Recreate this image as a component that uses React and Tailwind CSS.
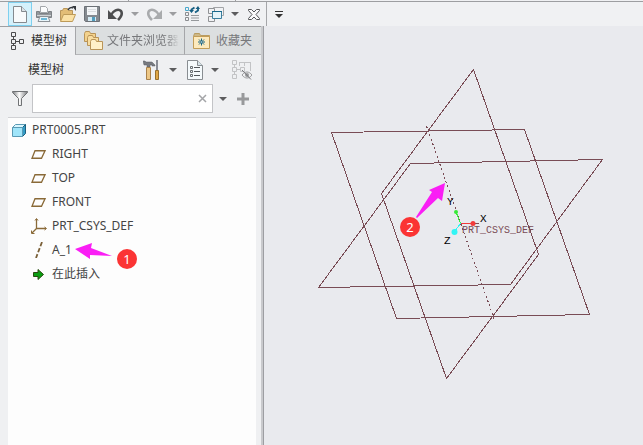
import React, { useState } from 'react';
import clsx from 'clsx';

const Caret = ({ className = 'text-[#5c5c5e]' }) => (
  <svg className={className} width="8" height="4" viewBox="0 0 8 4" fill="currentColor">
    <path d="M0 0h8L4 4z" />
  </svg>
);

const NewFileIcon = () => (
  <svg width="14" height="17" viewBox="0 0 14 17">
    <path d="M.5.5h8l5 5v11H.5z" fill="#f8fafb" stroke="#858a8f" />
    <path d="M8.5.5v5h5" fill="#dce3e7" stroke="#858a8f" />
  </svg>
);

const PrinterIcon = () => (
  <svg width="16" height="16" viewBox="0 0 16 16">
    <path d="M4.5.5h5l2 2v4h-7z" fill="#fbfcfd" stroke="#a3a7ab" />
    <path d="M.5 5.5h3v2h9v-2h3v6H.5z" fill="#94989c" stroke="#7d8185" />
    <path d="M1 9.5h14" stroke="#d0d3d6" />
    <path d="M4 10.5h8l2 5H2z" fill="#e9f5fa" stroke="#8d9297" />
    <path d="M5 13h6" stroke="#6cb8d8" strokeWidth="2" />
  </svg>
);

const OpenIcon = () => (
  <svg width="17" height="16" viewBox="0 0 17 16">
    <path d="M.5 14.5v-10h2l1-2h4l1 2h4v4" fill="#e3bd76" stroke="#b8955a" />
    <path d="M.5 15.5l3-7h12l-3 7z" fill="#fbe1a5" stroke="#bd9a58" />
    <path d="M8 4c1-2 3-3 5-2" fill="none" stroke="#34393e" strokeWidth="1.5" />
    <path d="M12 0h4v5z" fill="#34393e" />
  </svg>
);

const SaveIcon = () => (
  <svg width="16" height="16" viewBox="0 0 16 16">
    <path d="M.5.5h15v15h-14l-1-1z" fill="#858a90" stroke="#6c7177" />
    <path d="M3 1h10v8H3z" fill="#f4f6f8" />
    <path d="M4 3.5h8M4 5.5h8" stroke="#dadde0" />
    <path d="M4 11h8v4H4z" fill="#d4eaf4" />
    <path d="M8 11h3v4H8z" fill="#519dbe" />
  </svg>
);

const UndoIcon = ({ className }) => (
  <svg className={className} width="16" height="13" viewBox="0 0 16 13" fill="none">
    <path d="M3 7c2-4 7-7 10-4 2 3 0 6-3 9" stroke="currentColor" strokeWidth="2.6" />
    <path d="M0 2v9h9z" fill="currentColor" />
  </svg>
);

const RegenerateIcon = () => (
  <svg width="15" height="16" viewBox="0 0 15 16" fill="none">
    <path d="M.5 1.5h3v3h-3z" stroke="#4aa8cc" />
    <path d="M.5 6.5h3v3h-3zM.5 11.5h3v3h-3z" stroke="#8b8d90" />
    <path d="M6 9.5h8M6 12h8M6 14.5h8" stroke="#96999c" />
    <path d="M6.5 5V3.500l3-2M13 2v2.500l-3 2" stroke="#155f83" strokeWidth="1.8" />
    <path d="M4 4h5L6.500 7zM10.500 3h4.500L13 0z" fill="#155f83" />
  </svg>
);

const WindowsIcon = () => (
  <svg width="16" height="15" viewBox="0 0 16 15" fill="#f1f2f4">
    <path d="M5.500.5h10v8h-10z" stroke="#a2a4a7" />
    <path d="M.5 1.500h6v5h-6zM.5 9.500h6v5h-6z" stroke="#909295" />
    <path d="M4.500 4.500h9v7h-9z" fill="#e4f3f9" stroke="#3a7f9e" />
    <path d="M4 4.500h10" stroke="#17698c" />
  </svg>
);

const CloseWindowIcon = () => (
  <svg width="12" height="11" viewBox="0 0 12 11">
    <path
      d="M.5.5h3L6 3 8.500.5h3v1L8 5.500l3.500 4v1h-3L6 8l-2.500 2.500h-3v-1l3.500-4-3.500-4z"
      fill="#fafafb"
      stroke="#555659"
    />
  </svg>
);

const TreeTabIcon = () => (
  <svg width="14" height="18" viewBox="0 0 14 18" fill="none" stroke="#4b4b4d">
    <path d="M1.500.5h4v4h-4zM1.500 7.500h4v4h-4zM1.500 13.500h4v4h-4zM9.500 7.500h4v4h-4z" />
    <path d="M3.500 5v2M3.500 12v1M6 9.500h3" />
  </svg>
);

const FoldersIcon = () => (
  <svg width="19" height="19" viewBox="0 0 19 19" stroke="#b99458">
    <path d="M.5 10.500v-8l1-2h4l1 2h5v8z" fill="#f3d28d" />
    <path d="M3.500 14.500v-8l1-2h4l1 2h5v8z" fill="#f8dda0" />
    <path d="M6.500 18.500v-8l1-2h4l1 2h6v8z" fill="#fff0c9" />
  </svg>
);

const FavoritesIcon = () => (
  <svg width="17" height="16" viewBox="0 0 17 16">
    <path d="M.5 3.500l1-3h5l1 2h9v4H.5z" fill="#cdb887" stroke="#b99c60" />
    <path d="M.5 3.500h16v12H.5z" fill="#fdeabd" stroke="#c29d58" />
    <path d="M8.500 5.500v7M5 9h7M6 6.500l5 5M11 6.500l-5 5" stroke="#176485" />
    <path d="M8 8.500h1v1H8z" fill="#fff" />
  </svg>
);

const ToolsIcon = () => (
  <svg width="17" height="20" viewBox="0 0 17 20">
    <path d="M0 1h2l1 1h6l3 3v1H9V5H7v2H4V5H1z" fill="#777a80" stroke="#5b5e64" strokeWidth=".5" />
    <path d="M3.500 7.500h4v12h-4z" fill="#edc786" stroke="#a9814a" />
    <path d="M13 0h2v10h-2z" fill="#8a8d96" />
    <path d="M12.500 10.500h3v9h-3z" fill="#e0a746" stroke="#98702e" />
  </svg>
);

const SettingsListIcon = () => (
  <svg width="16" height="20" viewBox="0 0 16 20" fill="none">
    <path d="M.5.5h10l5 5v14H.5z" fill="#f5fafc" stroke="#888d91" />
    <path d="M10.500.5v5h5" fill="#d8e5ea" stroke="#888d91" />
    <path d="M3.500 6.500h2v2h-2zM3.500 10.500h2v2h-2zM3.500 14.500h2v2h-2z" stroke="#6b7074" />
    <path d="M7 7.500h6M7 11.500h6M7 15.500h6" stroke="#53585c" />
  </svg>
);

const HiddenTreeIcon = () => (
  <svg width="20" height="20" viewBox="0 0 20 20" fill="none" stroke="#c2c3c5">
    <path d="M.5.5h4v4h-4zM.5 7.500h4v4h-4zM.5 14.500h4v4h-4zM8.500 7.500h4v4h-4z" />
    <path d="M2.500 5v2M2.500 12v2M5 9.500h3M7 2.500h12M7.500 2v4M12.500 2v4M18.500 2v9" />
    <path d="M10 15c3-4 7-4 10 0-3 4-7 4-10 0z" stroke="#9a9b9d" />
    <circle cx="15" cy="15" r="2" fill="#9a9b9d" stroke="none" />
    <path d="M10 10l9 9.500" stroke="#77787b" />
  </svg>
);

const FilterIcon = () => (
  <svg width="16" height="15" viewBox="0 0 16 15">
    <defs>
      <linearGradient id="funnel">
        <stop stopColor="#77797c" />
        <stop offset=".45" stopColor="#fff" />
        <stop offset="1" stopColor="#77797c" />
      </linearGradient>
    </defs>
    <path d="M.5.5h15v1l-6 6v7h-3v-7l-6-6z" fill="url(#funnel)" stroke="#707275" />
  </svg>
);

const PartIcon = () => (
  <svg width="14" height="13" viewBox="0 0 14 13" strokeLinejoin="round">
    <path d="M.5 3.500l3-3h10l-3 3z" fill="#d9f7ff" stroke="#5a9ab5" />
    <path d="M10.500 3.500l3-3v9l-3 3z" fill="#339cc6" stroke="#1d5f7d" />
    <path d="M.5 3.500h10v9H.5z" fill="#a0e5fa" stroke="#5a9ab5" />
  </svg>
);

const PlaneIcon = () => (
  <svg width="15" height="9" viewBox="0 0 15 9" fill="none">
    <path d="M4 .75h10L10.500 8.250H1z" stroke="#8a6a38" strokeWidth="1.3" />
  </svg>
);

const CsysIcon = () => (
  <svg width="16" height="16" viewBox="0 0 16 16" fill="none" stroke="#8a6a38">
    <path d="M5.500 1v9.500H15M5.500 10.500L1 15" strokeWidth="1.3" />
    <path d="M4 2.500l1.500-2 1.500 2M13.500 9l2 1.500-2 1.500M.5 12.500v3H3.500" />
  </svg>
);

const AxisIcon = () => (
  <svg width="8" height="16" viewBox="0 0 8 16">
    <path d="M7 0L1 16" stroke="#7a6038" strokeWidth="1.8" strokeDasharray="4.500 2" />
  </svg>
);

const InsertIcon = () => (
  <svg width="11" height="11" viewBox="0 0 11 11">
    <path d="M.5 3.500H5V.5l5.500 5-5.500 5v-3H.5z" fill="#0a9e12" stroke="#2b4a10" />
  </svg>
);

const toolbarItems = [
  { label: '新建', icon: <NewFileIcon />, active: true },
  { label: '打印', icon: <PrinterIcon /> },
  { label: '打开', icon: <OpenIcon /> },
  { label: '保存', icon: <SaveIcon /> },
  { label: '撤消', icon: <UndoIcon className="text-[#4d4e50]" /> },
  { label: '撤消列表', icon: <Caret className="text-[#9c9da0]" />, narrow: true },
  { label: '重做', icon: <UndoIcon className="-scale-x-100 text-[#a9abad]" /> },
  { label: '重做列表', icon: <Caret className="text-[#9c9da0]" />, narrow: true },
  { label: '重新生成', icon: <RegenerateIcon /> },
  { label: '窗口', icon: <WindowsIcon /> },
  { label: '窗口列表', icon: <Caret />, narrow: true },
  { label: '关闭', icon: <CloseWindowIcon /> },
];

const tabs = [
  { id: 'tree', label: '模型树', icon: <TreeTabIcon />, size: 'w-[75px] pl-[10px] gap-[7px]' },
  { id: 'folders', label: '文件夹浏览器', icon: <FoldersIcon />, size: 'w-[109px] pl-2 gap-1', fade: true },
  { id: 'favorites', label: '收藏夹', icon: <FavoritesIcon />, size: 'w-[77px] pl-2 gap-[6px]' },
];

const treeItems = [
  { label: 'RIGHT', icon: <PlaneIcon /> },
  { label: 'TOP', icon: <PlaneIcon /> },
  { label: 'FRONT', icon: <PlaneIcon /> },
  { label: 'PRT_CSYS_DEF', icon: <CsysIcon /> },
  { label: 'A_1', icon: <AxisIcon />, marked: true },
  { label: '在此插入', icon: <InsertIcon /> },
];

const Toolbar = () => (
  <header className="bg-[#f0f1f3]">
    <div className="flex h-[2px] border-b border-[#9d9ea1]">
      <div className="w-[129px] border-r border-[#9d9ea1]" />
      <div className="w-[107px] border-r border-[#9d9ea1]" />
    </div>
    <div className="flex h-6 items-center pl-2">
      {toolbarItems.map((item) => (
        <button
          key={item.label}
          aria-label={item.label}
          className={clsx(
            'flex h-6 items-center justify-center',
            item.narrow ? 'w-[14px]' : 'w-6',
            item.active && 'border border-[#7fd0ef] bg-[#d5f1fb]'
          )}
        >
          {item.icon}
        </button>
      ))}
      <div className="h-6 w-px bg-[#a5a6a9]" />
      <button aria-label="自定义工具栏" className="flex w-6 flex-col items-center gap-[2px]">
        <span className="h-px w-2 bg-[#333]" />
        <Caret className="text-[#333]" />
      </button>
    </div>
  </header>
);

const TabBar = ({ active, onChange }) => (
  <div role="tablist" className="flex h-[29px] border-t border-[#9fa0a3]">
    {tabs.map((tab) => (
      <button
        key={tab.id}
        role="tab"
        aria-selected={active === tab.id}
        onClick={() => onChange(tab.id)}
        className={clsx(
          'flex items-center whitespace-nowrap',
          tab.size,
          active === tab.id
            ? 'text-[#333]'
            : 'border-b border-l border-b-[#b5b6b9] border-l-[#a5a6a9] bg-[#dcdfe0] text-[#77787b]'
        )}
      >
        <span className="shrink-0">{tab.icon}</span>
        <span className={clsx(tab.fade && '[mask-image:linear-gradient(to_right,black_82%,transparent)]')}>
          {tab.label}
        </span>
      </button>
    ))}
  </div>
);

const ModelTree = () => (
  <ul className="ml-2 mr-[5px] mt-1 flex-1 border-t border-[#d0d1d4] bg-[#fdfdfd] text-[#444]">
    <li>
      <div className="flex h-6 items-center gap-[6px] pl-1">
        <PartIcon />
        PRT0005.PRT
      </div>
      <ul>
        {treeItems.map((item) => (
          <li key={item.label} className="relative flex h-6 items-center gap-[5px] pl-[22px]">
            <span className="flex w-[17px] justify-center">{item.icon}</span>
            {item.label}
            {item.marked && (
              <svg className="absolute left-[67px] top-0 z-10 overflow-visible" width="62" height="32" viewBox="75 238 62 32">
                <path d="M75 249l17-6-1 5 21 8-22-1v4z" fill="#fa1ef5" />
                <circle cx="127" cy="259" r="10" fill="#fb3434" />
                <text x="127" y="264" textAnchor="middle" fontSize="13" fill="#fff">1</text>
              </svg>
            )}
          </li>
        ))}
      </ul>
    </li>
  </ul>
);

const Viewport = () => (
  <svg className="h-full w-full" viewBox="264 26 379 419">
    <g fill="none" stroke="#794c55" shapeRendering="crispEdges">
      <path d="M331.500 132.500L524.500 129.500L589.500 314.500L396.500 318.500z" />
      <path d="M473.500 69.500L538.500 254.500L446.500 378.500L381.500 193.500z" />
      <path d="M410.500 163.500L602.500 159.500L510.500 284.500L318.500 287.500z" />
      <path d="M426.500 126L494.500 320" strokeDasharray="2 2.500" />
    </g>
    {/* coordinate system */}
    <g fill="none" shapeRendering="crispEdges">
      <path d="M460.500 223.500L456 212" stroke="#3cf03c" />
      <path d="M460.500 223.500H474" stroke="#f23b3b" />
      <path d="M474 223.500h5" stroke="#794c55" />
      <path d="M460.500 223.500L454 232" stroke="#31f5f5" />
    </g>
    <circle cx="456" cy="212" r="2" fill="#37e937" />
    <circle cx="473" cy="223.500" r="2.500" fill="#f23b3b" />
    <circle cx="454.500" cy="232" r="3" fill="#31f5f5" />
    <g fontFamily="Liberation Mono, monospace" fontSize="10">
      <text x="462" y="233" fill="#794c55">PRT_CSYS_DEF</text>
      <g fill="#000" fontSize="11">
        <text x="447" y="205">Y</text>
        <text x="480" y="222">X</text>
        <text x="444" y="244">Z</text>
      </g>
    </g>
    <path d="M445 183l-16 7 3 2-16 25 1 1 21-20 4 3z" fill="#fa1ef5" />
    <circle cx="410" cy="227" r="10" fill="#fb3434" />
    <text x="410" y="232" textAnchor="middle" fontSize="13" fill="#fff">2</text>
  </svg>
);

const App = () => {
  const [activeTab, setActiveTab] = useState('tree');
  const [filter, setFilter] = useState('');

  return (
    <div className="flex h-screen flex-col bg-[#e9eaee] font-['Noto_Sans','Noto_Sans_CJK_SC',sans-serif] text-xs">
      <Toolbar />
      <div className="flex min-h-0 flex-1">
        <aside className="flex w-[264px] shrink-0 flex-col border-r border-[#9d9ea2] bg-[#eff0f2]">
          <div className="flex flex-1 flex-col border-r-2 border-[#c9cacd]">
            <TabBar active={activeTab} onChange={setActiveTab} />
            <div className="flex h-[29px] items-center pl-7 text-[#333]">
              <h2 className="w-[115px]">模型树</h2>
              <button aria-label="工具" className="flex items-center gap-[9px]">
                <ToolsIcon />
                <Caret />
              </button>
              <button aria-label="设置" className="ml-[10px] flex items-center gap-2">
                <SettingsListIcon />
                <Caret />
              </button>
              <button aria-label="显示" className="ml-[13px]">
                <HiddenTreeIcon />
              </button>
            </div>
            <div className="flex items-center pl-3">
              <FilterIcon />
              <div className="ml-1 flex h-[29px] w-[181px] items-center border border-[#c3c4c7] bg-white">
                <input
                  aria-label="过滤"
                  value={filter}
                  onChange={(e) => setFilter(e.target.value)}
                  className="h-full min-w-0 flex-1 px-2 outline-none"
                />
                <button aria-label="清除" onClick={() => setFilter('')} className="px-[5px]">
                  <svg width="9" height="9" viewBox="0 0 9 9" stroke="#a4a5a8" strokeWidth="1.5">
                    <path d="M1 1l7 7M8 1L1 8" />
                  </svg>
                </button>
              </div>
              <button aria-label="过滤选项" className="ml-[6px]">
                <Caret />
              </button>
              <button aria-label="添加" className="ml-[10px]">
                <svg width="12" height="12" viewBox="0 0 12 12" stroke="#98999b" strokeWidth="3">
                  <path d="M6 0v12M0 6h12" />
                </svg>
              </button>
            </div>
            <ModelTree />
          </div>
        </aside>
        <main className="min-w-0 flex-1">
          <Viewport />
        </main>
      </div>
    </div>
  );
};

export default App;
